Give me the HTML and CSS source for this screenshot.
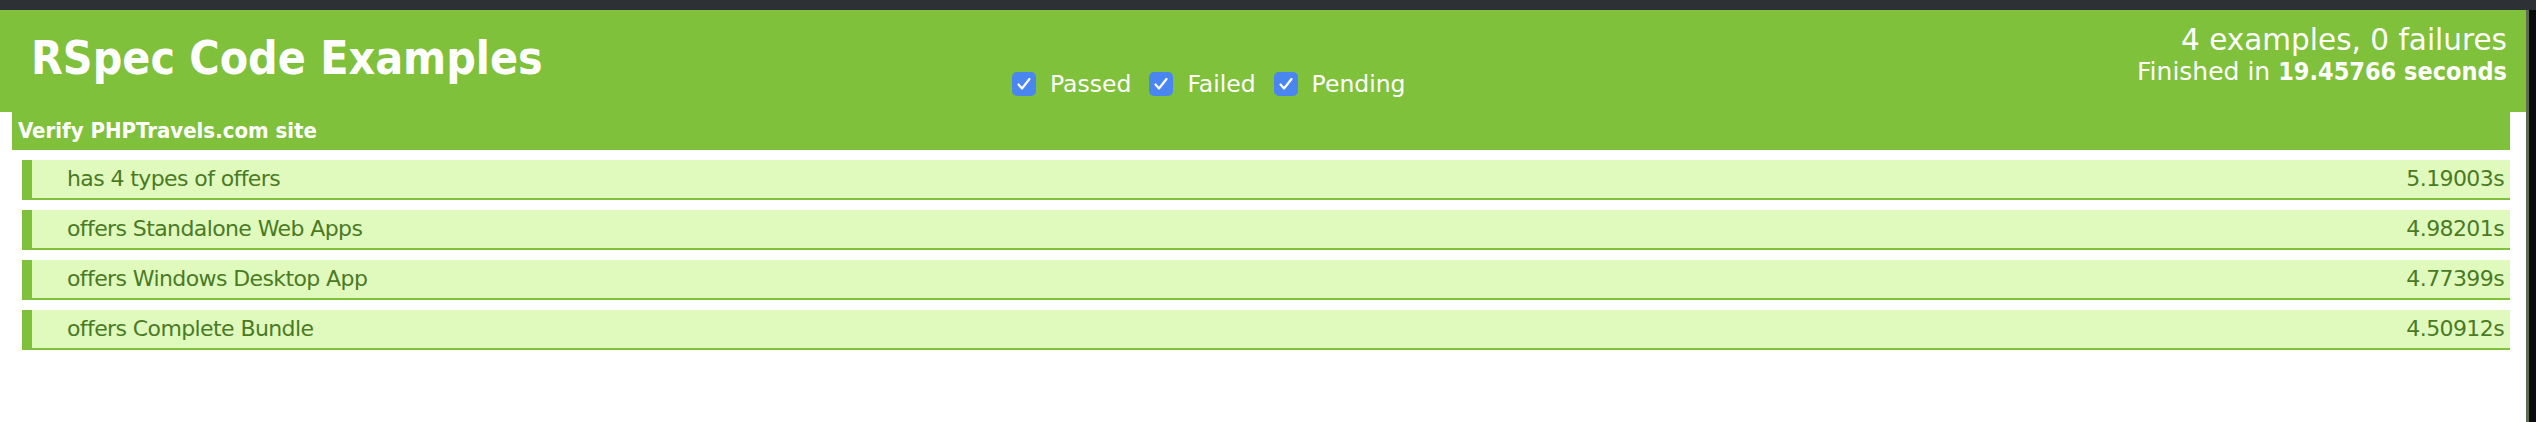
FILE: index.html
```html
<!DOCTYPE html>
<html lang="en">
<head>
<meta charset="utf-8">
<title>RSpec results</title>
<link rel="stylesheet" href="styles.css">
</head>
<body>
<div class="topbar"></div>
<div class="window">
  <div class="page">
    <div class="header">
      <div class="label"><h1>RSpec Code Examples</h1></div>
      <div class="filters">
        <span class="cb"><svg viewBox="0 0 24 24" width="24" height="24"><path d="M6.5 12.5 L10 16.5 L17.5 7" fill="none" stroke="#fff" stroke-width="2.2" stroke-linecap="round" stroke-linejoin="round"/></svg></span><span class="lbl">Passed</span>
        <span class="cb"><svg viewBox="0 0 24 24" width="24" height="24"><path d="M6.5 12.5 L10 16.5 L17.5 7" fill="none" stroke="#fff" stroke-width="2.2" stroke-linecap="round" stroke-linejoin="round"/></svg></span><span class="lbl">Failed</span>
        <span class="cb"><svg viewBox="0 0 24 24" width="24" height="24"><path d="M6.5 12.5 L10 16.5 L17.5 7" fill="none" stroke="#fff" stroke-width="2.2" stroke-linecap="round" stroke-linejoin="round"/></svg></span><span class="lbl">Pending</span>
      </div>
      <div class="summary">
        <p class="totals">4 examples, 0 failures</p>
        <p class="finished">Finished in <strong>19.45766 seconds</strong></p>
      </div>
    </div>
    <div class="group">
      <dl>
        <dt>Verify PHPTravels.com site</dt>
        <dd class="example"><span class="name">has 4 types of offers</span><span class="dur">5.19003s</span></dd>
        <dd class="example"><span class="name">offers Standalone Web Apps</span><span class="dur">4.98201s</span></dd>
        <dd class="example"><span class="name">offers Windows Desktop App</span><span class="dur">4.77399s</span></dd>
        <dd class="example"><span class="name">offers Complete Bundle</span><span class="dur">4.50912s</span></dd>
      </dl>
    </div>
  </div>
  <div class="edge"></div>
</div>
</body>
</html>
```
FILE: styles.css
```css
html, body {
  margin: 0;
  padding: 0;
  background: #ffffff;
  height: 422px;
  overflow: hidden;
}

.topbar {
  height: 10px;
  background: #2d3034;
}

.window {
  display: flex;
  height: 412px;
}

.page {
  flex: 1;
  background: #ffffff;
}

.edge {
  width: 7px;
  border-left: 3px solid #5f6a55;
  background: #0b0b0b;
}

.header {
  display: grid;
  grid-template-columns: 1012px auto 1fr;
  height: 102px;
  background: #7fc13a;
  color: #ffffff;
}

.label h1 {
  margin: 0;
  padding: 21px 0 0 31px;
  font-family: "DejaVu Sans Condensed", "DejaVu Sans", sans-serif;
  font-stretch: condensed;
  font-weight: bold;
  font-size: 46px;
  line-height: 54px;
}

.filters {
  display: flex;
  align-items: center;
  align-self: start;
  padding-top: 61px;
  font-family: "DejaVu Sans", sans-serif;
  font-size: 23.5px;
  line-height: 26px;
}

.cb {
  display: flex;
  width: 24px;
  height: 24px;
  border-radius: 5px;
  background: #4a86ef;
  margin-right: 14px;
}

.lbl {
  margin-right: 18px;
}

.summary {
  text-align: right;
  padding: 15px 19px 0 0;
  font-family: "DejaVu Sans", sans-serif;
}

.summary p {
  margin: 0;
}

.totals {
  font-size: 29.5px;
  line-height: 30px;
}

.finished {
  font-size: 25px;
  line-height: 33px;
}

.finished strong {
  font-family: "DejaVu Sans Condensed", "DejaVu Sans", sans-serif;
  font-stretch: condensed;
  font-weight: bold;
}

.group {
  margin: 0 16px 0 12px;
}

dl {
  margin: 0;
  padding: 0;
}

dt {
  padding: 6px;
  background: #7fc13a;
  color: #ffffff;
  font-family: "DejaVu Sans Condensed", "DejaVu Sans", sans-serif;
  font-stretch: condensed;
  font-weight: bold;
  font-size: 22px;
  line-height: 26px;
}

dd.example {
  display: flex;
  justify-content: space-between;
  margin: 10px 0 0 10px;
  padding: 6px 6px 6px 35px;
  border-left: 10px solid #7fc13a;
  border-bottom: 2px solid #7fc13a;
  background: #e0fabe;
  color: #4a7a24;
  font-family: "DejaVu Sans", sans-serif;
  font-size: 22px;
  line-height: 26px;
  letter-spacing: -0.6px;
}
```
